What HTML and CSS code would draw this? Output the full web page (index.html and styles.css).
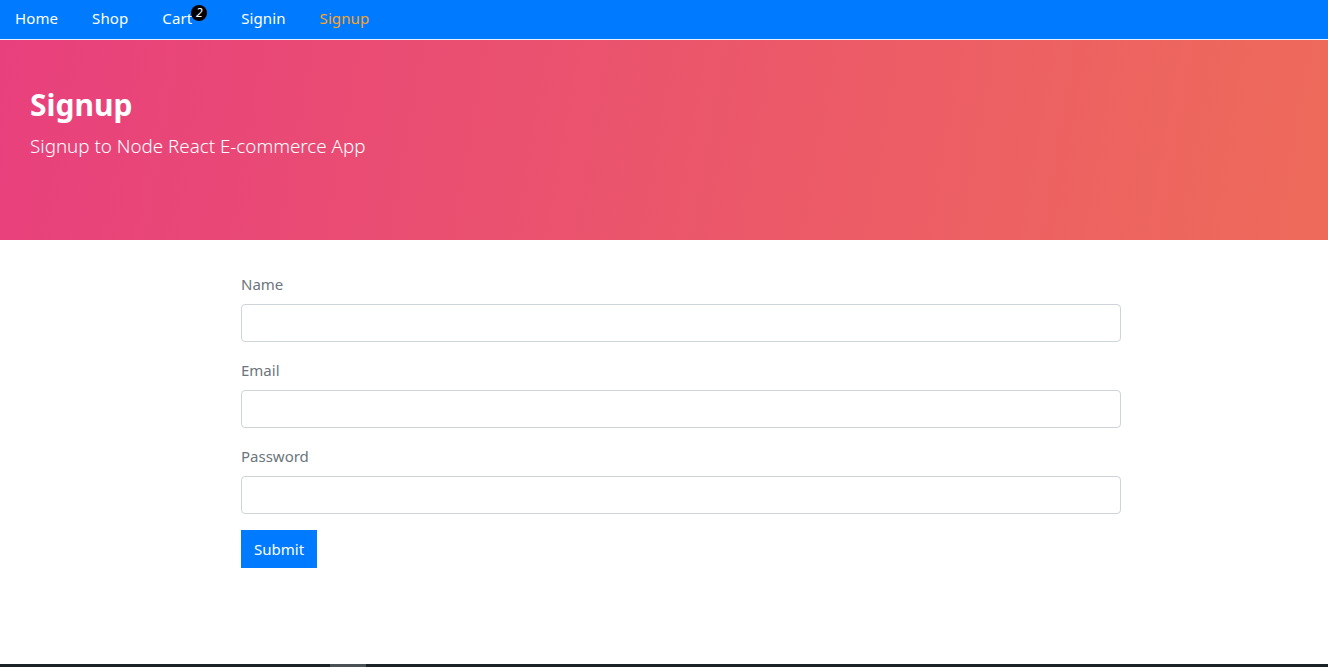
FILE: index.html
```html
<!DOCTYPE html>
<html lang="en">
<head>
<meta charset="utf-8">
<title>Signup</title>
<link rel="stylesheet" href="styles.css">
</head>
<body>
<nav class="navbar">
  <a class="nav-link" href="#">Home</a>
  <a class="nav-link" href="#">Shop</a>
  <a class="nav-link" href="#">Cart<sup class="badge">2</sup></a>
  <a class="nav-link" href="#">Signin</a>
  <a class="nav-link active" href="#">Signup</a>
</nav>
<header class="jumbotron">
  <h2 class="title">Signup</h2>
  <p class="lead">Signup to Node React E-commerce App</p>
</header>
<main class="content">
  <form class="form">
    <div class="form-group">
      <label class="label">Name</label>
      <input class="input" type="text">
    </div>
    <div class="form-group">
      <label class="label">Email</label>
      <input class="input" type="email">
    </div>
    <div class="form-group last">
      <label class="label">Password</label>
      <input class="input" type="password">
    </div>
    <button class="btn" type="button">Submit</button>
  </form>
</main>
<footer class="footer"><span class="footer-mark"></span></footer>
</body>
</html>
```

FILE: styles.css
```css
* { box-sizing: border-box; }
html, body { margin: 0; padding: 0; }
body {
  font-family: "Noto Sans", "Open Sans", "Liberation Sans", sans-serif;
  font-size: 15px;
  color: #212529;
  background: #fff;
}
.navbar {
  display: flex;
  height: 40px;
  background: #007bff;
  border-bottom: 1px solid #e9f0ff;
  padding: 0 0 0 15px;
}
.nav-link {
  display: block;
  color: #fff;
  text-decoration: none;
  padding: 0 17px;
  line-height: 36px;
  font-size: 15px;
  letter-spacing: 0.1px;
}
.nav-link:first-child { padding-left: 0; }
.nav-link.active { color: #ffa31a; }
.badge {
  display: inline-block;
  vertical-align: top;
  margin: 5px 0 0 -1px;
  width: 16px;
  height: 16px;
  border-radius: 50%;
  background: #000;
  color: #fff;
  font-size: 12px;
  font-style: italic;
  line-height: 16px;
  text-align: center;
  letter-spacing: 0;
}
.jumbotron {
  height: 200px;
  padding: 44px 30px 0;
  background: linear-gradient(100deg, #e8407d, #ee6b5a);
  color: #fff;
}
.title {
  margin: 0;
  font-size: 30px;
  font-weight: 700;
  line-height: 42px;
}
.lead {
  margin: 6px 0 0;
  font-size: 18.8px;
  font-weight: 300;
  line-height: 28px;
}
.content {
  height: 424px;
  padding: 33px 0 0 241px;
}
.form { width: 880px; }
.form-group { margin-bottom: 17px; }
.form-group.last { margin-bottom: 16px; }
.label {
  display: block;
  color: #6c757d;
  font-size: 15px;
  line-height: 22px;
  margin-bottom: 9px;
}
.input {
  display: block;
  width: 100%;
  height: 38px;
  border: 1px solid #ced4da;
  border-radius: 4px;
  background: #fff;
}
.btn {
  display: block;
  height: 38px;
  padding: 0 13px;
  background: #007bff;
  color: #fff;
  border: 0;
  border-radius: 0;
  font-family: inherit;
  font-size: 15px;
}
.footer {
  height: 3px;
  background: #1b2327;
  padding-left: 330px;
  overflow: hidden;
}
.footer-mark {
  display: block;
  width: 36px;
  height: 3px;
  background: #4a5054;
}
```
